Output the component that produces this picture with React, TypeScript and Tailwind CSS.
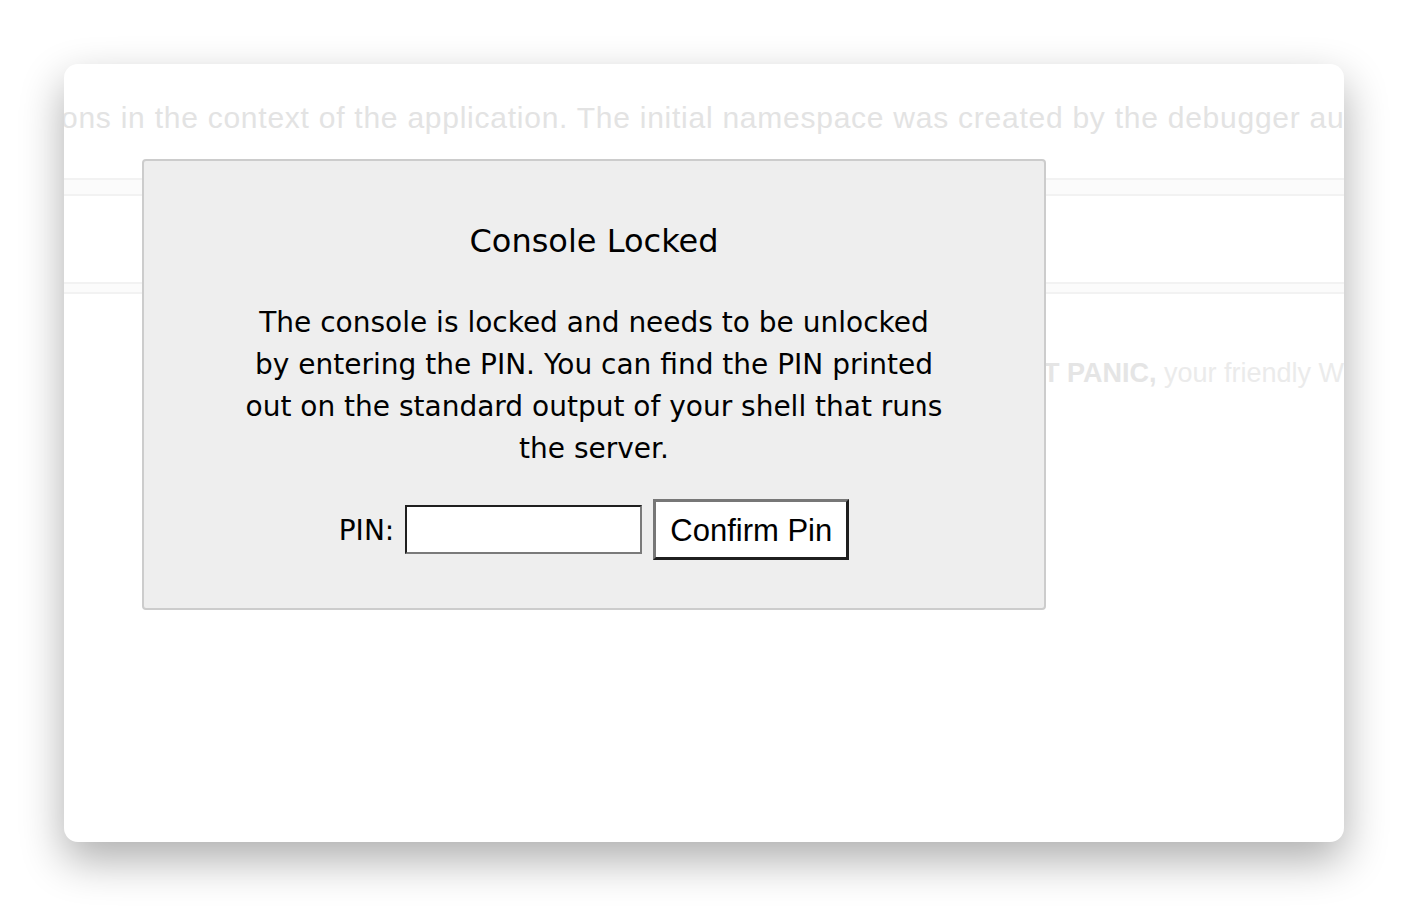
import { useState } from "react";

const App = () => {
  const [pin, setPin] = useState("");

  return (
    <div className="min-h-screen bg-white pt-16 pl-16 pr-16 pb-16">
      <div className="relative h-[778px] w-[1280px] overflow-hidden rounded-[14px] bg-white shadow-[0_18px_44px_rgba(0,0,0,0.32)]">
        {/* console page behind the lock prompt */}
        <div className="font-['Liberation_Sans',Arial,sans-serif]">
          <div className="ml-[-3px] mt-[38px] whitespace-nowrap text-[30px] leading-[32px] tracking-[0.75px] text-[#e3e3e3]">
            ons in the context of the application. The initial namespace was created by the debugger automatically.
          </div>
          <div className="mt-[44px] h-[18px] border-y-2 border-[#f2f2f2] bg-[#fbfbfb]" />
          <div className="mt-[86px] h-[12px] border-y-2 border-[#f2f2f2] bg-[#fbfbfb]" />
          <div className="mt-[64px] flex whitespace-nowrap text-[27px] leading-[30px] text-[#ebebeb]">
            <span className="w-[979px] shrink-0 text-right">
              Brought to you by <b className="text-[#e5e5e5]">DON'</b>
            </span>
            <span>
              <b className="text-[#e5e5e5]">T PANIC,</b> your friendly Werkzeug powered traceback interpreter.
            </span>
          </div>
        </div>

        <div className="absolute inset-0">
          <div className="ml-[78px] mt-[95px] w-[904px] rounded-[4px] border-2 border-[#cccccc] bg-[#eeeeee] px-[100px] pt-[20px] pb-[20px] text-center font-['DejaVu_Sans',Verdana,sans-serif] text-black">
            <h3 className="mt-[40px] text-[32px] leading-[40px]">Console Locked</h3>
            <p className="mt-[41px] text-[28px] leading-[42px]">
              The console is locked and needs to be unlocked by entering the PIN. You can find the PIN printed out on the standard output of your shell that runs the server.
            </p>
            <form
              className="mt-[29px] mb-[28px] flex items-center justify-center"
              onSubmit={(e) => e.preventDefault()}
            >
              <label className="pt-[3px] text-[28px] leading-[34px]">PIN:</label>
              <input
                type="text"
                value={pin}
                onChange={(e) => setPin(e.target.value)}
                className="ml-[11px] h-[49px] w-[237px] border-2 border-solid border-t-[#1f1f1f] border-l-[#1f1f1f] border-r-[#7a7a7a] border-b-[#7a7a7a] bg-white px-2 text-[28px] outline-none"
              />
              <button
                type="submit"
                className="ml-[11px] h-[61px] w-[196px] border-[3px] border-solid border-t-[#777777] border-l-[#777777] border-r-[#1f1f1f] border-b-[#1f1f1f] bg-white pt-[2px] font-['Liberation_Sans',Arial,sans-serif] text-[31px] leading-[36px] text-black"
              >
                Confirm Pin
              </button>
            </form>
          </div>
        </div>
      </div>
    </div>
  );
};

export default App;
